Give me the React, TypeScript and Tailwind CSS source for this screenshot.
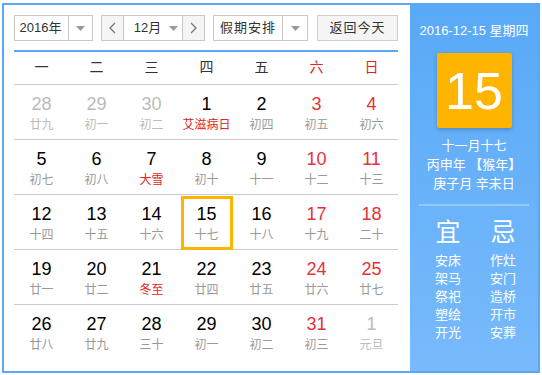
import React from "react";

type Day = {
  n: number;
  lunar: string;
  red?: boolean; // weekend number in red
  festival?: boolean; // lunar text in red
  other?: boolean; // not this month
  today?: boolean;
};

const weekdays = ["一", "二", "三", "四", "五", "六", "日"];

const weeks: Day[][] = [
  [
    { n: 28, lunar: "廿九", other: true },
    { n: 29, lunar: "初一", other: true },
    { n: 30, lunar: "初二", other: true },
    { n: 1, lunar: "艾滋病日", festival: true },
    { n: 2, lunar: "初四" },
    { n: 3, lunar: "初五", red: true },
    { n: 4, lunar: "初六", red: true },
  ],
  [
    { n: 5, lunar: "初七" },
    { n: 6, lunar: "初八" },
    { n: 7, lunar: "大雪", festival: true },
    { n: 8, lunar: "初十" },
    { n: 9, lunar: "十一" },
    { n: 10, lunar: "十二", red: true },
    { n: 11, lunar: "十三", red: true },
  ],
  [
    { n: 12, lunar: "十四" },
    { n: 13, lunar: "十五" },
    { n: 14, lunar: "十六" },
    { n: 15, lunar: "十七", today: true },
    { n: 16, lunar: "十八" },
    { n: 17, lunar: "十九", red: true },
    { n: 18, lunar: "二十", red: true },
  ],
  [
    { n: 19, lunar: "廿一" },
    { n: 20, lunar: "廿二" },
    { n: 21, lunar: "冬至", festival: true },
    { n: 22, lunar: "廿四" },
    { n: 23, lunar: "廿五" },
    { n: 24, lunar: "廿六", red: true },
    { n: 25, lunar: "廿七", red: true },
  ],
  [
    { n: 26, lunar: "廿八" },
    { n: 27, lunar: "廿九" },
    { n: 28, lunar: "三十" },
    { n: 29, lunar: "初一" },
    { n: 30, lunar: "初二" },
    { n: 31, lunar: "初三", red: true },
    { n: 1, lunar: "元旦", other: true },
  ],
];

const yi = ["安床", "架马", "祭祀", "塑绘", "开光"];
const ji = ["作灶", "安门", "造桥", "开市", "安葬"];

function Caret() {
  return (
    <svg width="9" height="5" viewBox="0 0 9 5">
      <path d="M0 0 L9 0 L4.5 5 Z" fill="#999" />
    </svg>
  );
}

function Chevron({ dir }: { dir: "left" | "right" }) {
  return (
    <svg width="7" height="12" viewBox="0 0 7 12">
      <polyline
        points={dir === "left" ? "6,1 1,6 6,11" : "1,1 6,6 1,11"}
        fill="none"
        stroke="#777"
        strokeWidth="1.3"
      />
    </svg>
  );
}

function DayCell({ d }: { d: Day }) {
  const numColor = d.other ? "text-[#bbb]" : d.red ? "text-[#e8303a]" : "text-black";
  const lunarColor = d.other
    ? "text-[#bbb]"
    : d.festival
    ? "text-[#e02424]"
    : "text-[#999]";

  const inner = (
    <div className="flex flex-col items-center">
      <span className={`text-[18px] leading-[20px] ${numColor}`}>{d.n}</span>
      <span className={`mt-[3px] text-[12px] leading-[16px] whitespace-nowrap ${lunarColor}`}>
        {d.lunar}
      </span>
    </div>
  );

  if (d.today) {
    return (
      <div className="flex h-full items-start justify-center">
        <div className="mt-px flex h-[54px] w-[52px] items-center justify-center border-[3px] border-[#ffb400] pt-[1px]">
          {inner}
        </div>
      </div>
    );
  }

  return <div className="flex h-full items-center justify-center pt-[2px]">{inner}</div>;
}

export default function App() {
  return (
    <div
      className="h-[375px] w-[542px] bg-white pl-[2px] pt-[3px]"
      style={{ fontFamily: '"Liberation Sans", "Noto Sans CJK SC", sans-serif' }}
    >
      <div className="flex h-[370px] w-[538px] border-2 border-[#5aa8f5]">
        {/* LEFT CALENDAR */}
        <div className="w-[406px] pl-[10px] pt-[10px]">
          <div className="flex h-[26px] w-[384px] items-stretch text-[13px] text-[#333]">
            <div className="flex w-[79px] border border-[#c8c8c8] bg-white">
              <div className="flex flex-1 items-center justify-center pr-[2px]">2016年</div>
              <div className="flex w-[24px] items-center justify-center border-l border-[#c8c8c8]">
                <Caret />
              </div>
            </div>

            <div className="ml-[8px] flex w-[104px] border border-[#c8c8c8] bg-white">
              <div className="flex w-[22px] items-center justify-center border-r border-[#c8c8c8] bg-[#f5f5f5]">
                <Chevron dir="left" />
              </div>
              <div className="flex flex-1 items-center justify-center gap-[8px] pl-[6px]">
                <span>12月</span>
                <Caret />
              </div>
              <div className="flex w-[22px] items-center justify-center border-l border-[#c8c8c8] bg-[#f5f5f5]">
                <Chevron dir="right" />
              </div>
            </div>

            <div className="ml-[8px] flex w-[95px] border border-[#c8c8c8] bg-white">
              <div className="flex flex-1 items-center justify-center tracking-[1px]">假期安排</div>
              <div className="flex w-[25px] items-center justify-center border-l border-[#c8c8c8]">
                <Caret />
              </div>
            </div>

            <div className="ml-[9px] flex w-[81px] items-center justify-center border border-[#d0d0d0] bg-[#f5f5f5] tracking-[1px]">
              返回今天
            </div>
          </div>

          <div className="mt-[9px] h-[2px] w-[384px] bg-[#5aa8f5]" />

          <div className="grid h-[33px] w-[384px] grid-cols-[repeat(7,55px)] border-b border-[#ccc] text-[14px]">
            {weekdays.map((w, i) => (
              <div
                key={w}
                className={`flex items-center justify-center pb-[1px] ${i >= 5 ? "text-[#e02424]" : "text-[#333]"}`}
              >
                {w}
              </div>
            ))}
          </div>

          {weeks.map((week, wi) => (
            <div
              key={wi}
              className={`grid h-[55px] w-[384px] grid-cols-[repeat(7,55px)] ${wi < weeks.length - 1 ? "border-b border-[#ccc]" : ""}`}
            >
              {week.map((d, di) => (
                <DayCell key={di} d={d} />
              ))}
            </div>
          ))}
        </div>

        {/* RIGHT PANEL */}
        <div className="flex w-[128px] flex-col items-center bg-gradient-to-b from-[#58a9f7] to-[#78bafc] text-white">
          <div className="mt-[17px] text-[13px] leading-[18px]">2016-12-15 星期四</div>
          <div className="mt-[13px] flex h-[75px] w-[75px] items-center justify-center rounded-[2px] bg-[#ffb400] text-[52px] leading-none shadow-[0_2px_4px_rgba(0,0,0,0.2)]">
            15
          </div>
          <div className="mt-[8px] text-[13px] leading-[19px]">十一月十七</div>
          <div className="text-[13px] leading-[19px]">丙申年 【猴年】</div>
          <div className="text-[13px] leading-[19px]">庚子月 辛未日</div>

          <div className="mt-[11px] h-[2px] w-[110px] bg-white/30" />

          <div className="mt-[11px] flex w-[110px] justify-between pl-[16px] pr-[13px]">
            <div className="flex flex-col items-center">
              <span className="text-[25px] leading-[30px]">宜</span>
              <div className="mt-[5px] flex flex-col items-center text-[13px] leading-[18px]">
                {yi.map((t) => (
                  <span key={t}>{t}</span>
                ))}
              </div>
            </div>
            <div className="flex flex-col items-center">
              <span className="text-[25px] leading-[30px]">忌</span>
              <div className="mt-[5px] flex flex-col items-center text-[13px] leading-[18px]">
                {ji.map((t) => (
                  <span key={t}>{t}</span>
                ))}
              </div>
            </div>
          </div>
        </div>
      </div>
    </div>
  );
}
